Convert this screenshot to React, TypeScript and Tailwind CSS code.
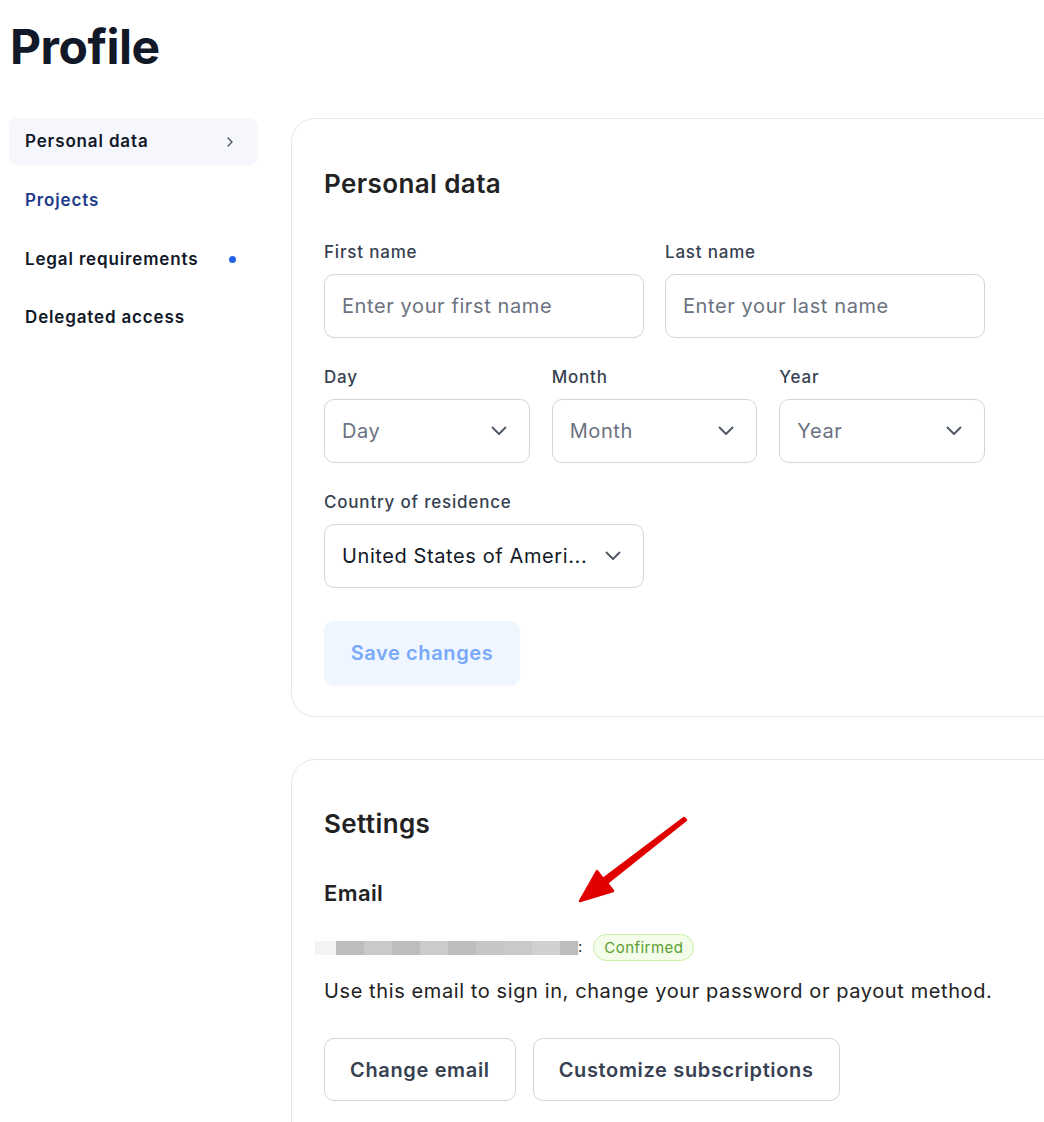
import React from "react";

const font = { fontFamily: "Inter, 'Noto Sans', sans-serif" };

function ChevronDown() {
  return (
    <svg width="16" height="10" viewBox="0 0 16 10" fill="none" stroke="#4b5563" strokeWidth="1.8" strokeLinecap="round" strokeLinejoin="round" className="shrink-0">
      <path d="M1.5 1.5l6.5 6.5 6.5-6.5" />
    </svg>
  );
}

function Field({ label, children }: { label: string; children: React.ReactNode }) {
  return (
    <div className="flex flex-col">
      <label className="mb-[10px] text-[17px] leading-6 font-medium tracking-[0.8px] text-[#374151]">{label}</label>
      {children}
    </div>
  );
}

function Input({ placeholder }: { placeholder: string }) {
  return (
    <div className="flex h-16 items-center rounded-[10px] border border-[#d1d5db] bg-white px-[17px]">
      <span className="text-[20px] tracking-[0.6px] text-[#6b7280]">{placeholder}</span>
    </div>
  );
}

function Select({ value, placeholder = true }: { value: string; placeholder?: boolean }) {
  return (
    <div className="flex h-16 items-center justify-between gap-3 rounded-[10px] border border-[#d1d5db] bg-white pl-[17px] pr-[22px]">
      <span className={`whitespace-nowrap text-[20px] tracking-[0.6px] ${placeholder ? "text-[#6b7280]" : "text-[#111827]"}`}>{value}</span>
      <ChevronDown />
    </div>
  );
}

const blocks = ["#f3f3f3", "#bdbdbd", "#c9c9c9", "#bdbdbd", "#cbcbcb", "#bdbdbd", "#c6c6c6", "#c9c9c9", "#d0d0d0", "#bdbdbd"];
const blockW = [21, 28, 28, 28, 28, 28, 28, 28, 28, 18];

export default function App() {
  return (
    <div style={font} className="relative min-h-[1122px] w-[1044px] overflow-hidden bg-white">
      <h1 className="pl-[10px] pt-[18px] text-[48px] leading-[58px] font-bold text-[#111827] tracking-[-0.5px]">Profile</h1>

      <div className="mt-[42px] flex gap-[33px] pl-[9px]">
        <nav className="flex w-[249px] shrink-0 flex-col text-[17px] font-semibold tracking-[0.85px]">
          <div className="flex h-[47px] items-center justify-between rounded-lg bg-[#f5f7fc] pl-4 pr-5 pt-[1px]">
            <span className="text-[#111827]">Personal data</span>
            <svg width="16" height="16" viewBox="0 0 24 24" fill="none" stroke="#4b5563" strokeWidth="2" strokeLinecap="round" strokeLinejoin="round">
              <path d="M9 6l6 6-6 6" />
            </svg>
          </div>
          <div className="mt-[7px] flex h-[58px] items-center pl-4 text-[#1e3a8a]">Projects</div>
          <div className="flex h-[59px] items-center justify-between pl-4 pr-[22px] text-[#111827]">
            <span>Legal requirements</span>
            <span className="h-[7px] w-[7px] rounded-full bg-[#2563eb]" />
          </div>
          <div className="flex h-[58px] items-center pl-4 text-[#111827]">Delegated access</div>
        </nav>

        <div className="flex w-[800px] shrink-0 flex-col gap-[42px]">
          <section className="rounded-[24px] border border-[#e5e7eb] px-8 pt-[49px] pb-[31px]">
            <h2 className="text-[26px] leading-8 font-semibold tracking-[0.4px] text-[#222222]">Personal data</h2>
            <div className="mt-10 flex w-[661px] flex-col gap-[27px]">
              <div className="grid grid-cols-2 gap-[21px]">
                <Field label="First name"><Input placeholder="Enter your first name" /></Field>
                <Field label="Last name"><Input placeholder="Enter your last name" /></Field>
              </div>
              <div className="grid grid-cols-3 gap-[22px]">
                <Field label="Day"><Select value="Day" /></Field>
                <Field label="Month"><Select value="Month" /></Field>
                <Field label="Year"><Select value="Year" /></Field>
              </div>
              <div className="w-[320px]">
                <Field label="Country of residence"><Select value="United States of Ameri..." placeholder={false} /></Field>
              </div>
            </div>
            <button className="mt-[33px] h-16 w-[196px] rounded-[10px] bg-[#eff6ff] text-[20px] font-semibold tracking-[0.6px] text-[#78a9fa] shadow-[0_1px_2px_rgba(0,0,0,0.04)]">
              Save changes
            </button>
          </section>

          <section className="min-h-[400px] rounded-[24px] border border-[#e5e7eb] px-8 pt-12 pb-8">
            <h2 className="text-[26px] leading-8 font-semibold tracking-[0.4px] text-[#222222]">Settings</h2>
            <h3 className="mt-[39px] text-[22px] leading-7 font-semibold tracking-[0.4px] text-[#222222]">Email</h3>
            <div className="mt-[27px] flex items-center">
              <div className="-ml-[9px] flex h-[14px]">
                {blocks.map((c, i) => (
                  <div key={i} style={{ backgroundColor: c, width: blockW[i] }} className="h-full" />
                ))}
              </div>
              <span className="text-[15px] text-[#333]">:</span>
              <span className="ml-[11px] rounded-full border border-[#c6f0a6] bg-[#f4fde9] px-[10px] py-[2px] text-[15px] leading-[21px] tracking-[0.45px] text-[#5a9e2f]">Confirmed</span>
            </div>
            <p className="mt-[16px] text-[20px] leading-7 tracking-[0.6px] text-[#222222]">Use this email to sign in, change your password or payout method.</p>
            <div className="mt-[33px] flex gap-[17px]">
              <button className="h-[63px] rounded-[10px] border border-[#d1d5db] px-[25px] text-[20px] font-semibold tracking-[0.65px] text-[#374151]">Change email</button>
              <button className="h-[63px] rounded-[10px] border border-[#d1d5db] px-[25px] text-[20px] font-semibold tracking-[0.65px] text-[#374151]">Customize subscriptions</button>
            </div>
          </section>
        </div>
      </div>

      <svg className="pointer-events-none absolute left-[575px] top-[815px]" width="120" height="95" viewBox="0 0 120 95">
        <path d="M111 5 L32 68 L38 76 L5 86 L22 56 L28 64 L109 3 Z" fill="#e00000" stroke="#e00000" strokeWidth="2.5" strokeLinejoin="round" />
      </svg>
    </div>
  );
}
